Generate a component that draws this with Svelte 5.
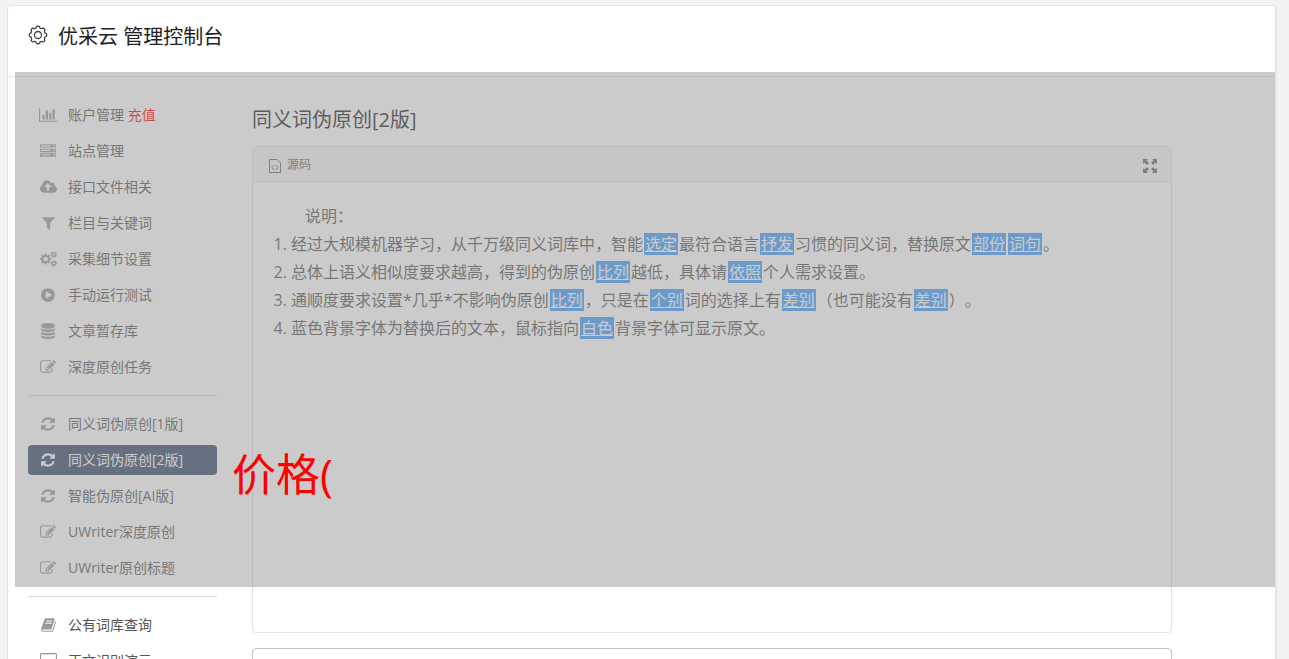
<script lang="ts">
  type Icon = { w: number; d: string };
  type Item = { icon: string; label: string; extra?: string; active?: boolean };

  // points of a toothed wheel, drawn as one closed path
  function gear(cx: number, cy: number, outer: number, inner: number, hole: number, teeth = 8) {
    const step = (Math.PI * 2) / teeth;
    const pts: string[] = [];
    for (let i = 0; i < teeth; i++) {
      const a = i * step;
      for (const [t, r] of [[-0.32, inner], [-0.2, outer], [0.2, outer], [0.32, inner]]) {
        pts.push(`${(cx + Math.cos(a + t * step) * r).toFixed(1)} ${(cy + Math.sin(a + t * step) * r).toFixed(1)}`);
      }
    }
    return `M${pts.join("L")}ZM${cx - hole} ${cy}a${hole} ${hole} 0 1 0 ${hole * 2} 0a${hole} ${hole} 0 1 0 ${-hole * 2} 0z`;
  }

  // outline with eight soft lobes for the header logo
  function lobes(c: number, r: number, depth: number) {
    const pts: string[] = [];
    for (let i = 0; i < 96; i++) {
      const a = (i / 96) * Math.PI * 2;
      const rr = r + depth * Math.tanh(2 * Math.cos(8 * a));
      pts.push(`${(c + Math.cos(a) * rr).toFixed(2)} ${(c + Math.sin(a) * rr).toFixed(2)}`);
    }
    return `M${pts.join("L")}Z`;
  }

  const icons: Record<string, Icon> = {
    chart: { w: 2048, d: "M640 896v512H384V896h256zm384-512v1024H768V384h256zm1024 1152v128H0V128h128v1408h1920zm-640-896v768h-256V640h256zm384-384v1152h-256V256h256z" },
    server: { w: 1792, d: "M128 1408h1024v-128H128v128zm0-512h1024V768H128v128zm1568 448q0-40-28-68t-68-28-68 28-28 68 28 68 68 28 68-28 28-68zM128 384h1024V256H128v128zm1568 448q0-40-28-68t-68-28-68 28-28 68 28 68 68 28 68-28 28-68zm0-512q0-40-28-68t-68-28-68 28-28 68 28 68 68 28 68-28 28-68zm96 832v384H0v-384h1792zm0-512v384H0V640h1792zm0-512v384H0V128h1792z" },
    cloud: { w: 1920, d: "M1280 864q0-14-9-23L919 489q-9-9-23-9t-23 9L522 840q-10 12-10 24 0 14 9 23t23 9h224v352q0 13 9.500 22.500t22.500 9.500h192q13 0 22.500-9.500t9.500-22.500V896h224q13 0 22.500-9.500t9.500-22.500zm640 288q0 159-112.500 271.500t-271.500 112.500H448q-185 0-316.500-131.500T0 1088q0-130 70-240t188-165q-2-30-2-43 0-212 150-362t362-150q156 0 285.500 87t188.500 231q71-62 166-62 106 0 181 75t75 181q0 76-41 138 130 31 213.500 135.500t83.500 238.500z" },
    filter: { w: 1408, d: "M1403 295q17 41-14 70l-493 493v742q0 42-39 59-13 5-25 5-27 0-45-19l-256-256q-19-19-19-45V858L19 365q-31-29-14-70 17-39 59-39h1280q42 0 59 39z" },
    cogs: { w: 1920, d: gear(640, 896, 640, 470, 245) + gear(1560, 400, 370, 260, 125) + gear(1560, 1392, 370, 260, 125) },
    play: { w: 1536, d: "M768 128q209 0 385.500 103t279.500 279.500 103 385.500-103 385.500-279.500 279.500-385.500 103-385.500-103T103 1281.500 0 896t103-385.500T382.500 231 768 128zm384 823q32-18 32-55t-32-55L608 521q-31-19-64-1-32 19-32 56v640q0 37 32 56 16 8 32 8 17 0 32-9z" },
    database: { w: 1536, d: "M768 768q237 0 443-43t325-127v170q0 69-103 128t-280 93.500-385 34.500-385-34.500T103 896 0 768V598q119 84 325 127t443 43zm0 768q237 0 443-43t325-127v170q0 69-103 128t-280 93.500-385 34.500-385-34.500T103 1664 0 1536v-170q119 84 325 127t443 43zm0-384q237 0 443-43t325-127v170q0 69-103 128t-280 93.500-385 34.500-385-34.500T103 1280 0 1152V982q119 84 325 127t443 43zM768 0q208 0 385 34.500t280 93.500 103 128v128q0 69-103 128t-280 93.500T768 640t-385-34.500T103 512 0 384V256q0-69 103-128t280-93.500T768 0z" },
    edit: { w: 1792, d: "M888 1184l116-116-152-152-116 116v56h96v96h56zm440-720q-16-16-33 1L945 815q-17 17-1 33t33-1l350-350q17-17 1-33zm80 594v190q0 119-84.500 203.500T1120 1536H288q-119 0-203.500-84.500T0 1248V416q0-119 84.500-203.500T288 128h832q63 0 117 25 15 7 18 23 3 17-9 29l-49 49q-14 14-32 8-23-6-45-6H288q-66 0-113 47t-47 113v832q0 66 47 113t113 47h832q66 0 113-47t47-113v-126q0-13 9-22l64-64q15-15 35-7t20 29zm-96-738l288 288-672 672H640V992zm444 132l-92 92-288-288 92-92q28-28 68-28t68 28l152 152q28 28 28 68t-28 68z" },
    refresh: { w: 1536, d: "M1511 1056q0 5-1 7-64 268-268 434.500T764 1664q-146 0-282.500-55T238 1452l-129 129q-19 19-45 19t-45-19-19-45v-448q0-26 19-45t45-19h448q26 0 45 19t19 45-19 45l-137 137q71 66 161 102t187 36q134 0 250-65t186-179q11-17 53-117 8-23 30-23h192q13 0 22.500 9.500t9.500 22.500zm25-800v448q0 26-19 45t-45 19h-448q-26 0-45-19t-19-45 19-45l138-138Q969 384 768 384q-134 0-250 65T332 628q-11 17-53 117-8 23-30 23H50q-13 0-22.500-9.500T18 736v-7q65-268 270-434.500T768 128q146 0 284 55.500T1297 340l130-129q19-19 45-19t45 19 19 45z" },
    book: { w: 1664, d: "M1639 478q40 57 18 129l-275 906q-19 64-76.500 107.500T1183 1664H260q-77 0-148.500-53.500T12 1479q-24-67-2-127 0-4 3-27t4-37q1-8-3-21.500t-3-19.500q2-11 8-21t16.500-23.500T52 1179q23-38 45-91.500t30-91.500q3-10 .5-30t-.5-28q3-11 17-28t17-23q21-36 42-92t25-90q1-9-2.500-32t.5-28q4-13 22-30.500t22-22.500q19-26 42.500-84.500T340 411q1-8-3-25.500t-2-26.500q2-8 9-18t18-23 17-21q8-12 16.500-30.500t15-35 16-36 19.500-32T469.500 140t36-11.500T553 134l-1 3q38-9 51-9h761q74 0 114 56t18 130l-274 906q-36 119-71.500 153.500T1022 1408H153q-27 0-38 15-11 16-1 43 24 70 144 70h923q29 0 56-15.500t35-41.500l300-987q7-22 5-57 38 15 59 43zm-1064 2q-4 13 2 22.500t20 9.500h608q13 0 25.500-9.500T1247 480l21-64q4-13-2-22.500t-20-9.500H638q-13 0-25.500 9.500T596 416zm-83 256q-4 13 2 22.500t20 9.500h608q13 0 25.500-9.500T1164 736l21-64q4-13-2-22.500t-20-9.500H555q-13 0-25.500 9.500T513 672z" },
    screen: { w: 1920, d: "M160 0H1760q160 0 160 160V1140q0 160-160 160H160Q0 1300 0 1140V160Q0 0 160 0zm0 128q-32 0-32 32V1140q0 32 32 32H1760q32 0 32-32V160q0-32-32-32zM640 1500H1280v160H640z" },
  };

  const groups: Item[][] = [
    [
      { icon: "chart", label: "账户管理", extra: "充值" },
      { icon: "server", label: "站点管理" },
      { icon: "cloud", label: "接口文件相关" },
      { icon: "filter", label: "栏目与关键词" },
      { icon: "cogs", label: "采集细节设置" },
      { icon: "play", label: "手动运行测试" },
      { icon: "database", label: "文章暂存库" },
      { icon: "edit", label: "深度原创任务" },
    ],
    [
      { icon: "refresh", label: "同义词伪原创[1版]" },
      { icon: "refresh", label: "同义词伪原创[2版]", active: true },
      { icon: "refresh", label: "智能伪原创[AI版]" },
      { icon: "edit", label: "UWriter深度原创" },
      { icon: "edit", label: "UWriter原创标题" },
    ],
    [
      { icon: "book", label: "公有词库查询" },
      { icon: "screen", label: "正文识别演示" },
    ],
  ];

  // odd parts are the replaced words
  const lines = [
    ["经过大规模机器学习，从千万级同义词库中，智能", "选定", "最符合语言", "抒发", "习惯的同义词，替换原文", "部份", "", "词句", "。"],
    ["总体上语义相似度要求越高，得到的伪原创", "比列", "越低，具体请", "依照", "个人需求设置。"],
    ["通顺度要求设置*几乎*不影响伪原创", "比列", "，只是在", "个别", "词的选择上有", "差别", "（也可能没有", "差别", "）。"],
    ["蓝色背景字体为替换后的文本，鼠标指向", "白色", "背景字体可显示原文。"],
  ];
</script>

<div class="page" lang="zh-CN">
  <div class="card">
    <header>
      <svg class="logo" viewBox="0 0 20 20" aria-hidden="true">
        <path d={lobes(10, 8, 0.8)} />
        <circle cx="10" cy="10" r="3.500" />
      </svg>
      <h1>优采云 管理控制台</h1>
    </header>

    <div class="content">
      <nav>
        {#each groups as group, i}
          {#if i > 0}<hr />{/if}
          <ul>
            {#each group as item}
              <li>
                <a href="#top" class:active={item.active}>
                  <span class="icon">
                    <svg width={Math.round(icons[item.icon].w / 112)} height="16" viewBox="0 0 {icons[item.icon].w} 1792" aria-hidden="true">
                      <path d={icons[item.icon].d} fill-rule="evenodd" />
                    </svg>
                  </span>
                  <span class="label">{item.label}{#if item.extra}&nbsp;<em>{item.extra}</em>{/if}</span>
                </a>
              </li>
            {/each}
          </ul>
        {/each}
      </nav>

      <main>
        <h2>同义词伪原创[2版]</h2>
        <section class="editor">
          <div class="toolbar">
            <button type="button">
              <svg width="12" height="14" viewBox="0 0 12 14" aria-hidden="true">
                <path d="M.5.5h7.500l3.500 3.500v9.500H.5zM5 6L3 8.500 5 11M7 6l2 2.500L7 11" fill="none" stroke="currentColor" />
              </svg>
              源码
            </button>
            <button type="button" aria-label="全屏">
              <svg width="14" height="14" viewBox="0 0 14 14" aria-hidden="true">
                <path d="M0 0h5L3.500 1.500l2.500 2.500L4 6 1.500 3.500 0 5zM14 0v5l-1.500-1.500L10 6 8 4l2.500-2.500L9 0zM0 14V9l1.500 1.500L4 8l2 2-2.500 2.500L5 14zM14 14H9l1.500-1.500L8 10l2-2 2.500 2.500L14 9z" />
              </svg>
            </button>
          </div>
          <div class="text">
            <p>说明：</p>
            <ol>
              {#each lines as parts}
                <li>{#each parts as part, i}{#if i % 2}<mark>{part}</mark>{:else}{part}{/if}{/each}</li>
              {/each}
            </ol>
          </div>
        </section>
        <textarea aria-label="结果"></textarea>
      </main>
    </div>
  </div>

  <div class="shade"><strong>价格(</strong></div>
</div>

<style>
  :global(body) {
    margin: 0;
    background: #f2f2f2;
  }

  .page {
    position: relative;
    box-sizing: border-box;
    height: 100vh;
    overflow: hidden;
    padding: 5px 12px 0 7px;
    color: #555;
    font-family: "Open Sans", "Noto Sans CJK SC", sans-serif;
    font-size: 14px;
    text-spacing-trim: space-all;
  }

  .card {
    min-height: 100vh;
    background: #fff;
    border: 1px solid #e5e5e5;
    border-right-width: 2px;
    border-radius: 4px;
  }

  header {
    display: flex;
    align-items: center;
    gap: 10px;
    height: 71px;
    padding: 0 20px 12px;
    box-sizing: border-box;
    border-bottom: 1px solid #e5e5e5;
  }

  .logo {
    width: 20px;
    height: 20px;
    fill: none;
    stroke: #444;
    stroke-width: 1.3;
    stroke-linejoin: round;
  }

  h1,
  h2 {
    margin: 0;
    font-size: 20px;
    line-height: 28px;
    font-weight: 400;
    color: #222;
  }

  h1 {
    padding-top: 4px;
  }

  .content {
    display: flex;
    gap: 35px;
    padding: 23px 103px 0 20px;
  }

  nav {
    flex: 0 0 189px;
  }

  ul {
    display: flex;
    flex-direction: column;
    gap: 6px;
    margin: 0;
    padding: 0;
    list-style: none;
  }

  hr {
    height: 1px;
    margin: 13px 0;
    border: 0;
    background: #ddd;
  }

  nav a {
    display: flex;
    align-items: center;
    gap: 10px;
    height: 30px;
    padding: 0 10px;
    border-radius: 4px;
    color: #555;
    text-decoration: none;
    white-space: nowrap;
  }

  nav a.active {
    background: #344968;
    color: #fff;
  }

  .icon {
    display: flex;
    justify-content: center;
    width: 20px;
    color: #999;
  }

  .label {
    padding-bottom: 2px;
  }

  .active .icon {
    color: #fff;
  }

  svg {
    fill: currentColor;
  }

  em {
    font-style: normal;
    color: #f00;
  }

  main {
    flex: 1;
    min-width: 0;
  }

  h2 {
    margin: 6px 0 12px;
  }

  .editor {
    box-sizing: border-box;
    min-height: 487px;
    border: 1px solid #e2e2e2;
    border-radius: 4px;
  }

  .toolbar {
    display: flex;
    align-items: center;
    justify-content: space-between;
    height: 34px;
    padding: 0 14px 0 16px;
    background: #f5f5f5;
    border-bottom: 1px solid #e2e2e2;
  }

  button {
    display: flex;
    align-items: center;
    gap: 6px;
    padding: 0;
    border: 0;
    background: none;
    color: #666;
    font: inherit;
    font-size: 12px;
  }

  .toolbar svg {
    margin-top: 4px;
  }

  .text {
    padding: 20px;
    font-size: 16px;
    line-height: 28px;
  }

  p {
    margin: 0;
    text-indent: 2em;
  }

  ol {
    margin: 0;
    padding-left: 18px;
  }

  mark {
    margin: 0 1px;
    padding: 0 1px;
    background: #409eff;
    color: #fff;
    text-decoration: underline;
  }

  textarea {
    display: block;
    box-sizing: border-box;
    width: 100%;
    height: 120px;
    margin-top: 15px;
    border: 1px solid #c4c4c4;
    border-radius: 4px;
    background: #fff;
    resize: none;
  }

  /* half-transparent sheet over the whole working area */
  .shade {
    position: absolute;
    top: 72px;
    left: 15px;
    right: 14px;
    height: 515px;
    background: rgba(151, 151, 151, 0.5);
  }

  .shade strong {
    position: absolute;
    top: 370px;
    left: 217px;
    color: #f00;
    font-size: 44px;
    line-height: 64px;
    font-weight: 400;
  }
</style>
